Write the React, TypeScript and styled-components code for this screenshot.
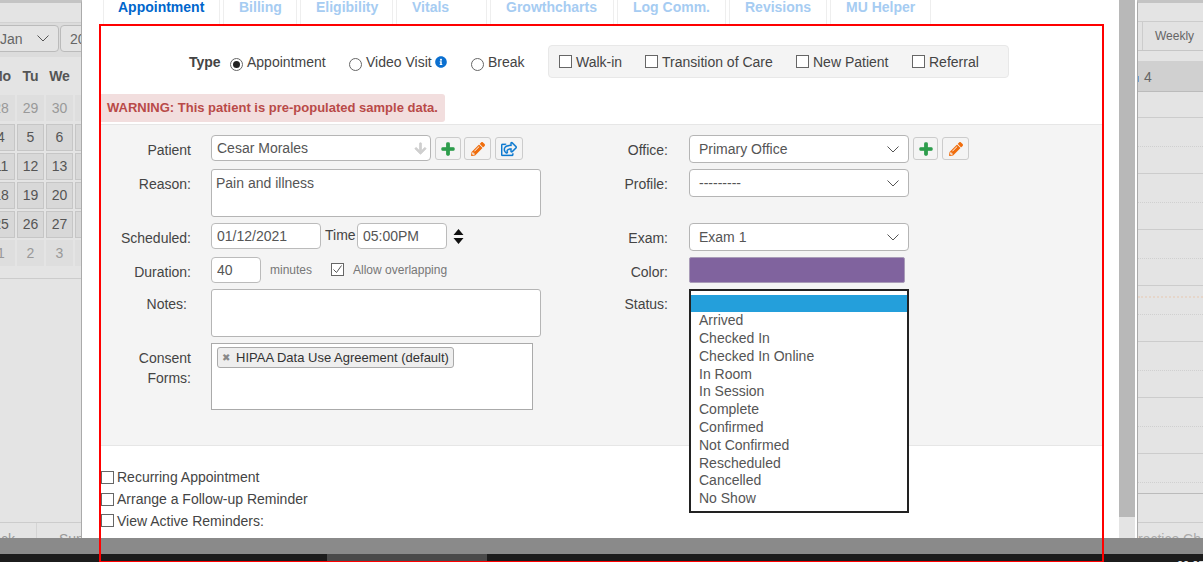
import React from 'react';
import styled, {createGlobalStyle} from "styled-components";
import {FaArrowDown, FaInfoCircle, FaPencilAlt, FaPlus, FaRegShareSquare} from "react-icons/fa";

const GlobalStyle = createGlobalStyle`
  html, body {
    margin: 0;
    padding: 0;
    height: 587px;
    overflow: hidden;
    background: #fff;
    font-family: "Liberation Sans", Arial, sans-serif;
    font-size: 14px;
    color: #444;
  }
  * {
    box-sizing: border-box;
  }
`;

const Screen = styled.div`
  position: relative;
  display: flex;
  width: 1203px;
  height: 562px;
  overflow: hidden;
`;

/* calendar on the left, behind the modal */
const LeftPanel = styled.div`
  position: relative;
  width: 82px;
  flex: none;
  display: flex;
  flex-direction: column;
  height: 538px;
  overflow: hidden;
  background: #e4e4e4;
  border-right: 1px solid #aaa;
  border-top: 3px solid #c4c4c4;
`;

const MonthBar = styled.div`
  display: flex;
  gap: 1px;
  height: 35px;
  margin: 19px 0 0 -12px;
  padding-top: 2px;
  background: #dcdcdc;
  border-top: 1px solid #d2d2d2;
`;

const MonthSelect = styled.div<{$w: number; $pl: number}>`
  flex: none;
  display: flex;
  align-items: center;
  justify-content: space-between;
  width: ${p => p.$w}px;
  height: 27px;
  padding: 0 9px 0 ${p => p.$pl}px;
  border: 1px solid #bbb;
  border-radius: 4px;
  background: #e4e4e4;
  color: #666;
`;

const Calendar = styled.div`
  display: grid;
  grid-template-columns: 28px repeat(3, 27px);
  column-gap: 2px;
  margin-left: -13px;
  padding-bottom: 9px;
  border-bottom: 1px solid #ccc;
`;

const DayName = styled.div`
  height: 38px;
  line-height: 38px;
  text-align: center;
  font-weight: bold;
  color: #555;
`;

const DayCell = styled.div<{$muted?: boolean}>`
  height: ${p => p.$muted ? 26 : 27}px;
  margin-bottom: ${p => p.$muted ? 3 : 2}px;
  line-height: 25px;
  text-align: center;
  background: ${p => p.$muted ? "#dedede" : "#d8d8d8"};
  border: 1px solid ${p => p.$muted ? "#dedede" : "#c6c6c6"};
  color: ${p => p.$muted ? "#999" : "#555"};
`;

const LeftTabs = styled.div`
  display: flex;
  margin-top: auto;
  height: 16px;
  border-top: 1px solid #ccc;
`;

const LeftTab = styled.div<{$w: number}>`
  flex: none;
  display: flex;
  justify-content: flex-end;
  width: ${p => p.$w}px;
  padding: 8px 21px 0 0;
  color: #999;
  white-space: nowrap;
  & + & {
    justify-content: flex-start;
    padding: 8px 0 0 22px;
    border-left: 1px solid #d4d4d4;
  }
`;

/* the modal */
const Modal = styled.div`
  position: relative;
  width: 1037px;
  flex: none;
  padding-left: 19px;
  background: #fff;
`;

const Tabs = styled.div`
  display: flex;
  gap: 3px;
  height: 24px;
  margin-left: 2px;
`;

const Tab = styled.div<{$w: number; $active?: boolean}>`
  flex: none;
  width: ${p => p.$w}px;
  padding-left: ${p => p.$active ? 14 : 15}px;
  line-height: 14px;
  font-weight: bold;
  color: ${p => p.$active ? "#0066cc" : "#a6ccf2"};
  border-left: 1px solid #eee;
  border-right: 1px solid #eee;
`;

const Body = styled.div`
  width: 1001px;
`;

const TypeRow = styled.div`
  display: flex;
  align-items: flex-start;
  height: 70px;
  padding: 21px 0 0 88px;
`;

const TypeLabel = styled.div`
  width: 41px;
  flex: none;
  height: 33px;
  line-height: 34px;
  font-weight: bold;
  color: #444;
`;

const RadioOption = styled.label<{$w: number}>`
  flex: none;
  display: flex;
  gap: 4px;
  width: ${p => p.$w}px;
  line-height: 34px;
  height: 33px;
`;

const Radio = styled.span<{$on?: boolean}>`
  position: relative;
  flex: none;
  width: 13px;
  height: 13px;
  margin-top: 13px;
  border: 1px solid #666;
  border-radius: 50%;
  background: #fff;
  &::after {
    content: "";
    display: ${p => p.$on ? "block" : "none"};
    position: absolute;
    left: 2px;
    top: 2px;
    width: 7px;
    height: 7px;
    border-radius: 50%;
    background: #222;
  }
`;

const InfoIcon = styled(FaInfoCircle)`
  margin: 11px 0 0 -1px;
  width: 12px;
  height: 12px;
  color: #0a6fd0;
  vertical-align: top;
`;

const FlagBox = styled.div`
  flex: none;
  display: flex;
  align-items: center;
  width: 461px;
  height: 33px;
  margin-left: 24px;
  padding-left: 10px;
  background: #f4f4f4;
  border: 1px solid #e8e8e8;
  border-radius: 4px;
`;

const CheckOption = styled.label<{$w?: number; $gap?: number}>`
  flex: none;
  display: flex;
  align-items: center;
  gap: ${p => p.$gap || 4}px;
  width: ${p => p.$w ? p.$w + "px" : "auto"};
`;

const Box = styled.span`
  flex: none;
  display: flex;
  align-items: center;
  justify-content: center;
  width: 13px;
  height: 13px;
  background: #fff;
  border: 1px solid #666;
`;

const Warning = styled.div`
  display: inline-block;
  height: 28px;
  padding: 0 7px 0 6px;
  line-height: 28px;
  font-size: 13px;
  font-weight: bold;
  color: #b94a48;
  background: #f2dede;
  border-radius: 0 3px 3px 0;
  vertical-align: top;
`;

const WarningRow = styled.div`
  height: 28px;
`;

const Form = styled.div`
  display: flex;
  height: 322px;
  margin-top: 2px;
  padding-top: 10px;
  background: #f4f4f4;
  border-top: 1px solid #e6e6e6;
  border-bottom: 1px solid #e6e6e6;
`;

const Column = styled.div<{$w: number}>`
  flex: none;
  width: ${p => p.$w}px;
`;

const Field = styled.div<{$top?: number; $h: number}>`
  position: relative;
  display: flex;
  height: ${p => p.$h}px;
  margin-top: ${p => p.$top || 0}px;
`;

const Label = styled.div<{$gap?: number; $dy?: number; $pr?: number}>`
  flex: none;
  width: 90px;
  margin-right: ${p => p.$gap || 20}px;
  padding-top: ${p => p.$dy || 0}px;
  padding-right: ${p => p.$pr || 0}px;
  text-align: right;
  line-height: 20px;
  color: #444;
`;

const Input = styled.input<{$w: number}>`
  flex: none;
  width: ${p => p.$w}px;
  height: 26px;
  padding: 0 5px;
  font: inherit;
  color: #555;
  background: #fff;
  border: 1px solid #bbb;
  border-radius: 4px;
  outline: none;
`;

const TextArea = styled.textarea`
  flex: none;
  width: 330px;
  height: 100%;
  padding: 5px 4px;
  font: inherit;
  color: #555;
  background: #fff;
  border: 1px solid #b5b5b5;
  border-radius: 3px;
  outline: none;
  resize: none;
`;

const PatientBox = styled.div`
  flex: none;
  display: flex;
  align-items: center;
  justify-content: space-between;
  width: 220px;
  height: 26px;
  padding: 0 3px 0 5px;
  color: #555;
  background: #fff;
  border: 1px solid #b5b5b5;
  border-radius: 4px;
`;

const IconButton = styled.button<{$w: number; $color: string; $gap?: number}>`
  flex: none;
  display: flex;
  align-items: center;
  justify-content: center;
  width: ${p => p.$w}px;
  height: 23px;
  margin: 2px 0 0 ${p => p.$gap || 4}px;
  padding: 0;
  color: ${p => p.$color};
  background: #f4f4f4;
  border: 1px solid #ccc;
  border-radius: 3px;
  font-size: 14px;
`;

const BoldPlus = styled(FaPlus)`
  stroke: currentColor;
  stroke-width: 40;
`;

const ShareIcon = styled(FaRegShareSquare)`
  stroke: currentColor;
  stroke-width: 8;
`;

const GreyArrow = styled(FaArrowDown)`
  color: #cfcfcf;
  width: 13px;
  height: 13px;
  stroke: currentColor;
  stroke-width: 30;
`;

const TimeLabel = styled.span`
  flex: none;
  width: 36px;
  padding-left: 4px;
  line-height: 24px;
`;

const SpinnerSvg = styled.svg`
  flex: none;
  margin: 6px 0 0 6px;
`;

const Small = styled.span<{$left: number}>`
  flex: none;
  margin-left: ${p => p.$left}px;
  font-size: 12px;
  line-height: 26px;
  color: #777;
`;

const SmallCheck = styled(Box)`
  margin: 6px 9px 0 19px;
`;

const TagBox = styled.div`
  flex: none;
  width: 322px;
  height: 100%;
  padding: 3px 5px;
  background: #fff;
  border: 1px solid #aaa;
`;

const Tag = styled.div`
  display: inline-flex;
  align-items: center;
  gap: 5px;
  height: 21px;
  padding: 0 4px;
  font-size: 13px;
  color: #333;
  background: #eee;
  border: 1px solid #aaa;
  border-radius: 3px;
`;

const TagClose = styled.span`
  width: 9px;
  font-family: "DejaVu Sans", sans-serif;
  font-size: 10px;
  line-height: 14px;
  color: #888;
`;

const Select = styled.div`
  flex: none;
  display: flex;
  align-items: center;
  justify-content: space-between;
  width: 220px;
  height: 28px;
  padding: 0 9px;
  color: #555;
  background: #fff;
  border: 1px solid #b5b5b5;
  border-radius: 4px;
`;

const ColorSwatch = styled.div`
  flex: none;
  width: 216px;
  height: 26px;
  background: #80639e;
  border: 1px solid #a99cb8;
  border-radius: 2px;
`;

const StatusList = styled.ul`
  position: absolute;
  left: 111px;
  top: 0;
  z-index: 1;
  width: 220px;
  height: 224px;
  margin: 0;
  padding: 4px 0 0;
  list-style: none;
  color: #555;
  background: #fff;
  border: 2px solid #222;
`;

const StatusItem = styled.li<{$selected?: boolean}>`
  height: ${p => p.$selected ? 17.3 : 17.8}px;
  padding-left: 8px;
  line-height: 17.8px;
  background: ${p => p.$selected ? "#249fdb" : "transparent"};
`;

const Extras = styled.div`
  padding-top: 20px;
`;

const ExtraRow = styled(CheckOption)`
  height: 22px;
  & + & + & {
    height: 21px;
  }
`;

/* scrollbar and weekly grid on the right */
const Scrollbar = styled.div`
  flex: none;
  width: 16px;
  height: 538px;
  background: #e4e4e4;
`;

const ScrollThumb = styled.div`
  height: 517px;
  background: #b8b8b8;
`;

const RightPanel = styled.div`
  flex: none;
  width: 66px;
  height: 538px;
  margin-left: 2px;
  overflow: hidden;
  background: #e4e4e4;
  border-left: 1px solid #aaa;
  border-top: 3px solid #c4c4c4;
`;

const ViewBar = styled.div`
  display: flex;
  justify-content: flex-end;
  height: 30px;
  margin-top: 18px;
  background: #e2e2e2;
  border-top: 1px solid #ccc;
  border-bottom: 1px solid #c6c6c6;
`;

const ViewButton = styled.div`
  width: 61px;
  padding-left: 12px;
  font-size: 12px;
  line-height: 28px;
  color: #666;
  border-left: 1px solid #ccc;
`;

const DayHeader = styled.div`
  height: 31px;
  margin-top: 10px;
  font-size: 14px;
  line-height: 32px;
  color: #666;
  background: #d0d0d0;
  border-bottom: 1px solid #bbb;
  &::before {
    content: "";
    display: inline-block;
    width: 1px;
    height: 6px;
    margin-right: 5px;
    background: #6f9fd0;
  }
`;

const lineColors = {
  solid: "1px solid #ccc",
  strong: "1px solid #bbb",
  dotted: "1px dotted #d0d0d0",
  orange: "2px dotted #e6d6ca",
};

const SlotRow = styled.div<{$h: number; $line: keyof typeof lineColors}>`
  height: ${p => p.$h}px;
  border-bottom: ${p => lineColors[p.$line]};
`;

const RightFooter = styled.div`
  padding-top: 8px;
  color: #aaa;
  white-space: nowrap;
`;

/* video player controls lying over the page */
const Player = styled.div`
  position: absolute;
  left: 0;
  right: 0;
  bottom: 0;
  z-index: 2;
  height: 24px;
  overflow: hidden;
  background: #8a8a8a;
`;

const PlayerTrack = styled.div`
  position: relative;
  height: 8px;
  margin-top: 16px;
  background: #1c1c1c;
`;

const PlayerBuffer = styled.div`
  position: absolute;
  left: 327px;
  top: 0;
  width: 160px;
  height: 8px;
  background: #4a4a4a;
`;

const PlayerTime = styled.span`
  position: absolute;
  left: 1177px;
  top: 5px;
  font-size: 11px;
  color: #fff;
`;

const RedFrame = styled.div`
  position: absolute;
  left: 17px;
  top: 24px;
  z-index: 3;
  width: 1005px;
  height: 538px;
  border: 2px solid #f00;
  border-bottom-width: 1px;
  pointer-events: none;
`;

const Chevron = () => (
  <svg width="12" height="7" viewBox="0 0 12 7" fill="none" stroke="#555" strokeWidth="1">
    <path d="M0.5 0.5 L6 6 L11.5 0.5"/>
  </svg>
);

const Check = () => (
  <svg width="11" height="11" viewBox="0 0 11 11" fill="none" stroke="#555" strokeWidth="1">
    <path d="M1.5 5.5 L4.5 8.5 L9.5 1.5"/>
  </svg>
);

const Spinner = () => (
  <SpinnerSvg width="11" height="15" viewBox="0 0 11 15" fill="#111">
    <path d="M5.5 0 L10.5 6 H0.5 Z M0.5 9 H10.5 L5.5 15 Z"/>
  </SpinnerSvg>
);

const TABS = [
  {name: "Appointment", w: 117, active: true},
  {name: "Billing", w: 74},
  {name: "Eligibility", w: 93},
  {name: "Vitals", w: 91},
  {name: "Growthcharts", w: 124},
  {name: "Log Comm.", w: 109},
  {name: "Revisions", w: 98},
  {name: "MU Helper", w: 101},
];

const FLAGS = [
  {name: "Walk-in", w: 86},
  {name: "Transition of Care", w: 151},
  {name: "New Patient", w: 116},
  {name: "Referral"},
];

const STATUSES = [
  "Arrived", "Checked In", "Checked In Online", "In Room", "In Session", "Complete",
  "Confirmed", "Not Confirmed", "Rescheduled", "Cancelled", "No Show",
];

const WEEKS = [
  {days: [28, 29, 30], muted: true},
  {days: [4, 5, 6]},
  {days: [11, 12, 13]},
  {days: [18, 19, 20]},
  {days: [25, 26, 27]},
  {days: [1, 2, 3], muted: true},
];

const SLOTS: {h: number; line: keyof typeof lineColors}[] = [
  {h: 26, line: "solid"}, {h: 29, line: "dotted"}, {h: 27, line: "solid"}, {h: 29, line: "dotted"},
  {h: 27, line: "solid"}, {h: 29, line: "dotted"}, {h: 27, line: "solid"}, {h: 12, line: "orange"},
  {h: 17, line: "dotted"}, {h: 27, line: "solid"}, {h: 29, line: "dotted"}, {h: 27, line: "solid"},
  {h: 29, line: "dotted"}, {h: 27, line: "solid"}, {h: 29, line: "dotted"}, {h: 11, line: "strong"},
  {h: 29, line: "solid"},
];

const App: React.FC = () => (
  <Screen>
    <GlobalStyle/>
    <LeftPanel>
      <MonthBar>
        <MonthSelect $w={71} $pl={11}>Jan <Chevron/></MonthSelect>
        <MonthSelect $w={60} $pl={9}>20</MonthSelect>
      </MonthBar>
      <Calendar>
        {["Mo", "Tu", "We", ""].map(d => <DayName key={d}>{d}</DayName>)}
        {WEEKS.map(week => (
          <React.Fragment key={week.days[0]}>
            {week.days.map(d => <DayCell key={d} $muted={week.muted}>{d}</DayCell>)}
            <DayCell $muted={week.muted}/>
          </React.Fragment>
        ))}
      </Calendar>
      <LeftTabs>
        <LeftTab $w={36}>Back</LeftTab>
        <LeftTab $w={60}>Sun</LeftTab>
      </LeftTabs>
    </LeftPanel>

    <Modal>
      <Tabs>
        {TABS.map(t => <Tab key={t.name} $w={t.w} $active={t.active}>{t.name}</Tab>)}
      </Tabs>
      <Body>
        <TypeRow>
          <TypeLabel>Type</TypeLabel>
          <RadioOption $w={119}><Radio $on/>Appointment</RadioOption>
          <RadioOption $w={122}><Radio/><span>Video Visit <InfoIcon/></span></RadioOption>
          <RadioOption $w={53}><Radio/>Break</RadioOption>
          <FlagBox>
            {FLAGS.map(f => (
              <CheckOption key={f.name} $w={f.w}><Box/>{f.name}</CheckOption>
            ))}
          </FlagBox>
        </TypeRow>
        <WarningRow>
          <Warning>WARNING: This patient is pre-populated sample data.</Warning>
        </WarningRow>
        <Form>
          <Column $w={477}>
            <Field $h={26}>
              <Label $dy={5}>Patient</Label>
              <PatientBox>Cesar Morales <GreyArrow/></PatientBox>
              <IconButton $w={26} $color="#2e9d4c"><BoldPlus/></IconButton>
              <IconButton $gap={3} $w={27} $color="#f06d0c"><FaPencilAlt/></IconButton>
              <IconButton $w={28} $color="#0d7ad0"><ShareIcon size={16}/></IconButton>
            </Field>
            <Field $top={8} $h={48}>
              <Label $dy={5}>Reason:</Label>
              <TextArea readOnly value="Pain and illness"/>
            </Field>
            <Field $top={6} $h={26}>
              <Label $dy={5}>Scheduled:</Label>
              <Input readOnly $w={110} value="01/12/2021"/>
              <TimeLabel>Time</TimeLabel>
              <Input readOnly $w={90} value="05:00PM"/>
              <Spinner/>
            </Field>
            <Field $top={8} $h={26}>
              <Label $dy={5}>Duration:</Label>
              <Input readOnly $w={50} value="40"/>
              <Small $left={9}>minutes</Small>
              <SmallCheck><Check/></SmallCheck>
              <Small $left={0}>Allow overlapping</Small>
            </Field>
            <Field $top={6} $h={48}>
              <Label $dy={5} $pr={4}>Notes:</Label>
              <TextArea readOnly value=""/>
            </Field>
            <Field $top={6} $h={67}>
              <Label $dy={5}>Consent Forms:</Label>
              <TagBox>
                <Tag><TagClose>✖</TagClose>HIPAA Data Use Agreement (default)</Tag>
              </TagBox>
            </Field>
          </Column>
          <Column $w={524}>
            <Field $h={28}>
              <Label $gap={21} $dy={5}>Office:</Label>
              <Select>Primary Office <Chevron/></Select>
              <IconButton $w={25} $color="#2e9d4c"><BoldPlus/></IconButton>
              <IconButton $w={27} $color="#f06d0c"><FaPencilAlt/></IconButton>
            </Field>
            <Field $top={6} $h={28}>
              <Label $gap={21} $dy={5}>Profile:</Label>
              <Select>--------- <Chevron/></Select>
            </Field>
            <Field $top={26} $h={28}>
              <Label $gap={21} $dy={5}>Exam:</Label>
              <Select>Exam 1 <Chevron/></Select>
            </Field>
            <Field $top={6} $h={26}>
              <Label $gap={21} $dy={5}>Color:</Label>
              <ColorSwatch/>
            </Field>
            <Field $top={6} $h={26}>
              <Label $gap={21} $dy={5}>Status:</Label>
              <StatusList>
                <StatusItem $selected/>
                {STATUSES.map(s => <StatusItem key={s}>{s}</StatusItem>)}
              </StatusList>
            </Field>
          </Column>
        </Form>
        <Extras>
          <ExtraRow $gap={3}><Box/>Recurring Appointment</ExtraRow>
          <ExtraRow $gap={3}><Box/>Arrange a Follow-up Reminder</ExtraRow>
          <ExtraRow $gap={3}><Box/>View Active Reminders:</ExtraRow>
        </Extras>
      </Body>
      <RedFrame/>
    </Modal>

    <Scrollbar><ScrollThumb/></Scrollbar>

    <RightPanel>
      <ViewBar><ViewButton>Weekly</ViewButton></ViewBar>
      <DayHeader>4</DayHeader>
      {SLOTS.map((s, i) => <SlotRow key={i} $h={s.h} $line={s.line}/>)}
      <RightFooter>ractice Ch</RightFooter>
    </RightPanel>

    <Player>
      <PlayerTrack>
        <PlayerBuffer/>
        <PlayerTime>00:07</PlayerTime>
      </PlayerTrack>
    </Player>
  </Screen>
);

export default App;
